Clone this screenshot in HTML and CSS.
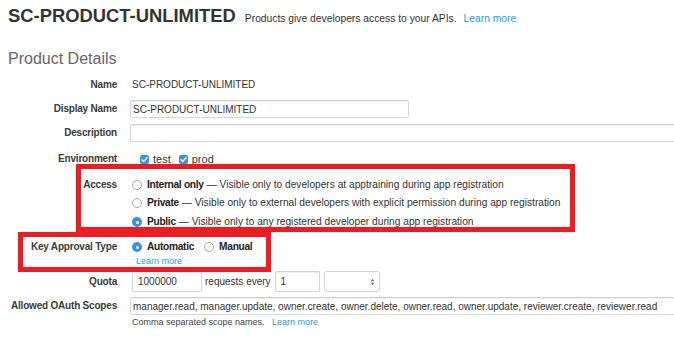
FILE: index.html
```html
<!DOCTYPE html>
<html lang="en">
<head>
    <meta charset="UTF-8">
    <meta name="viewport" content="width=device-width, initial-scale=1.0">
    <title>SC-PRODUCT-UNLIMITED</title>
    <link rel="stylesheet" href="styles.css">
</head>
<body>

<div class="page">

    <!-- Page title -->
    <header class="title-bar">
        <h1>SC-PRODUCT-UNLIMITED</h1>
        <span class="subtitle">Products give developers access to your APIs.</span>
        <a href="#" class="link">Learn more</a>
    </header>

    <h2 class="section-title">Product Details</h2>

    <!-- Form rows -->
    <div class="row row-name">
        <label class="label">Name</label>
        <div class="value plain">SC-PRODUCT-UNLIMITED</div>
    </div>

    <div class="row row-display">
        <label class="label">Display Name</label>
        <div class="value">
            <input type="text" class="input input-display" value="SC-PRODUCT-UNLIMITED">
        </div>
    </div>

    <div class="row row-desc">
        <label class="label">Description</label>
        <div class="value">
            <input type="text" class="input input-wide" value="">
        </div>
    </div>

    <div class="row row-env">
        <label class="label">Environment</label>
        <div class="value checks">
            <span class="check">
                <svg viewBox="0 0 10 10" width="9" height="9"><path d="M2.2 5.2 L4.2 7.2 L7.9 2.9" fill="none" stroke="#fff" stroke-width="1.5" stroke-linecap="round" stroke-linejoin="round"/></svg>
            </span>
            <span class="check-text">test</span>
            <span class="check">
                <svg viewBox="0 0 10 10" width="9" height="9"><path d="M2.2 5.2 L4.2 7.2 L7.9 2.9" fill="none" stroke="#fff" stroke-width="1.5" stroke-linecap="round" stroke-linejoin="round"/></svg>
            </span>
            <span class="check-text">prod</span>
        </div>
    </div>

    <div class="row row-access">
        <label class="label">Access</label>
        <div class="value options">
            <div class="option">
                <span class="radio"></span>
                <span class="opt-name">Internal only</span>&nbsp;— Visible only to developers at apptraining during app registration
            </div>
            <div class="option">
                <span class="radio"></span>
                <span class="opt-name">Private</span>&nbsp;— Visible only to external developers with explicit permission during app registration
            </div>
            <div class="option">
                <span class="radio checked"></span>
                <span class="opt-name">Public</span>&nbsp;— Visible only to any registered developer during app registration
            </div>
        </div>
    </div>

    <div class="row row-key">
        <label class="label">Key Approval Type</label>
        <div class="value">
            <div class="option">
                <span class="radio checked"></span>
                <span class="opt-name">Automatic</span>
                <span class="radio radio-gap"></span>
                <span class="opt-name">Manual</span>
            </div>
            <a href="#" class="link small key-link">Learn more</a>
        </div>
    </div>

    <div class="row row-quota">
        <label class="label label-tall">Quota</label>
        <div class="value quota">
            <input type="text" class="input input-quota" value="1000000">
            <span class="quota-text">requests every</span>
            <input type="text" class="input input-every" value="1">
            <span class="select">
                <svg viewBox="0 0 6 10" width="5" height="8"><path d="M0.5 4 L3 1 L5.5 4 Z M0.5 6 L3 9 L5.5 6 Z" fill="#777"/></svg>
            </span>
        </div>
    </div>

    <div class="row row-scopes">
        <label class="label">Allowed OAuth Scopes</label>
        <div class="value">
            <input type="text" class="input input-wide input-scopes" value="manager.read, manager.update, owner.create, owner.delete, owner.read, owner.update, reviewer.create, reviewer.read">
            <div class="hint">Comma separated scope names. <a href="#" class="link">Learn more</a></div>
        </div>
    </div>

    <!-- Red highlight boxes -->
    <div class="highlight highlight-access"></div>
    <div class="highlight highlight-key"></div>

</div>

</body>
</html>
```

FILE: styles.css
```css
/* page */
body {
    margin: 0;
    padding: 0;
    font-family: "Liberation Sans", Arial, sans-serif;
    font-size: 10px;
    color: #333;
    background-color: #fff;
    overflow: hidden;
}

.page {
    position: relative;
    width: 674px;
    height: 337px;
    padding-left: 8px;
    box-sizing: border-box;
}

.link {
    color: #2c9ae0;
    text-decoration: none;
}

/* title */
.title-bar {
    display: flex;
    align-items: baseline;
    padding-top: 5px;
    line-height: 22px;
}

.title-bar h1 {
    margin: 0;
    font-size: 18.4px;
    font-weight: bold;
    color: #333;
}

.subtitle {
    margin-left: 9px;
    font-size: 10.3px;
    color: #333;
}

.title-bar .link {
    margin-left: 7px;
    font-size: 10.3px;
}

.section-title {
    margin: 19px 0 0 0;
    font-size: 16px;
    line-height: 20px;
    font-weight: normal;
    color: #666;
}

/* rows */
.row {
    display: flex;
    align-items: flex-start;
}

.label {
    width: 109px;
    margin-right: 13px;
    text-align: right;
    font-weight: bold;
    letter-spacing: -0.2px;
    white-space: nowrap;
    line-height: 18px;
    color: #3a3a3a;
    flex-shrink: 0;
}

.label-tall {
    line-height: 21px;
}

.value {
    line-height: 18px;
}

.plain {
    padding-left: 2px;
}

.row-name { margin-top: 7px; }
.row-display { margin-top: 6px; }
.row-desc { margin-top: 6px; }
.row-env { margin-top: 8px; }
.row-access { margin-top: 8px; }
.row-key { margin-top: 7px; }
.row-quota { margin-top: 5px; }
.row-scopes { margin-top: 5px; }

/* inputs */
.input {
    height: 18px;
    box-sizing: border-box;
    border: 1px solid #d6d6d6;
    border-top-color: #cfcfcf;
    border-radius: 2px;
    box-shadow: inset 0 1px 1px rgba(0, 0, 0, 0.06);
    font-family: "Liberation Sans", Arial, sans-serif;
    font-size: 10px;
    color: #333;
    padding: 0 2px;
    margin: 0;
    display: block;
    outline: none;
}

.input-display {
    width: 279px;
}

.input-wide {
    width: 570px;
}

/* checkboxes */
.checks {
    display: flex;
    align-items: center;
    height: 18px;
    padding-left: 10px;
}

.check {
    width: 9px;
    height: 9px;
    border-radius: 2px;
    background-color: #3b8fec;
    display: flex;
    align-items: center;
    justify-content: center;
}

.check-text {
    margin-left: 4px;
    margin-right: 8px;
    font-size: 11px;
}

/* radios */
.options .option:last-child {
    margin-top: 1px;
}

.option {
    display: flex;
    align-items: center;
    height: 18px;
    white-space: nowrap;
    padding-left: 2px;
    font-size: 10.2px;
}

.radio {
    width: 10px;
    height: 10px;
    box-sizing: border-box;
    border-radius: 50%;
    border: 1px solid #a9a9a9;
    background-color: #fff;
    margin-right: 5px;
    flex-shrink: 0;
    position: relative;
}

.radio.checked {
    border: none;
    background-color: #3b8fec;
}

.radio.checked::after {
    content: "";
    position: absolute;
    left: 3.5px;
    top: 3.5px;
    width: 3px;
    height: 3px;
    border-radius: 50%;
    background-color: #fff;
}

.radio-gap {
    margin-left: 10px;
}

.opt-name {
    color: #222;
    font-weight: bold;
    letter-spacing: -0.3px;
}

.small {
    font-size: 9px;
}

.key-link {
    display: block;
    line-height: 10px;
    padding-left: 6px;
}

/* quota */
.quota {
    display: flex;
    align-items: center;
    padding-left: 2px;
}

.quota .input {
    height: 21px;
}

.input-quota {
    width: 70px;
    padding-left: 5px;
}

.quota-text {
    margin: 0 4px 0 3px;
}

.input-every {
    width: 45px;
    padding-left: 5px;
}

.select {
    width: 56px;
    height: 21px;
    box-sizing: border-box;
    margin-left: 4px;
    border: 1px solid #d6d6d6;
    border-radius: 3px;
    display: flex;
    align-items: center;
    justify-content: flex-end;
    padding-right: 4px;
}

/* scopes */
.hint {
    font-size: 9px;
    line-height: 12px;
    color: #444;
    padding-left: 2px;
    margin-top: 1px;
}

.hint .link {
    margin-left: 5px;
}

/* red annotation boxes */
.highlight {
    position: absolute;
    border: 5px solid #ec1c24;
    box-sizing: border-box;
}

.highlight-access {
    left: 76px;
    top: 164px;
    width: 499px;
    height: 68px;
}

.highlight-key {
    left: 18px;
    top: 232px;
    width: 253px;
    height: 40px;
}
```
